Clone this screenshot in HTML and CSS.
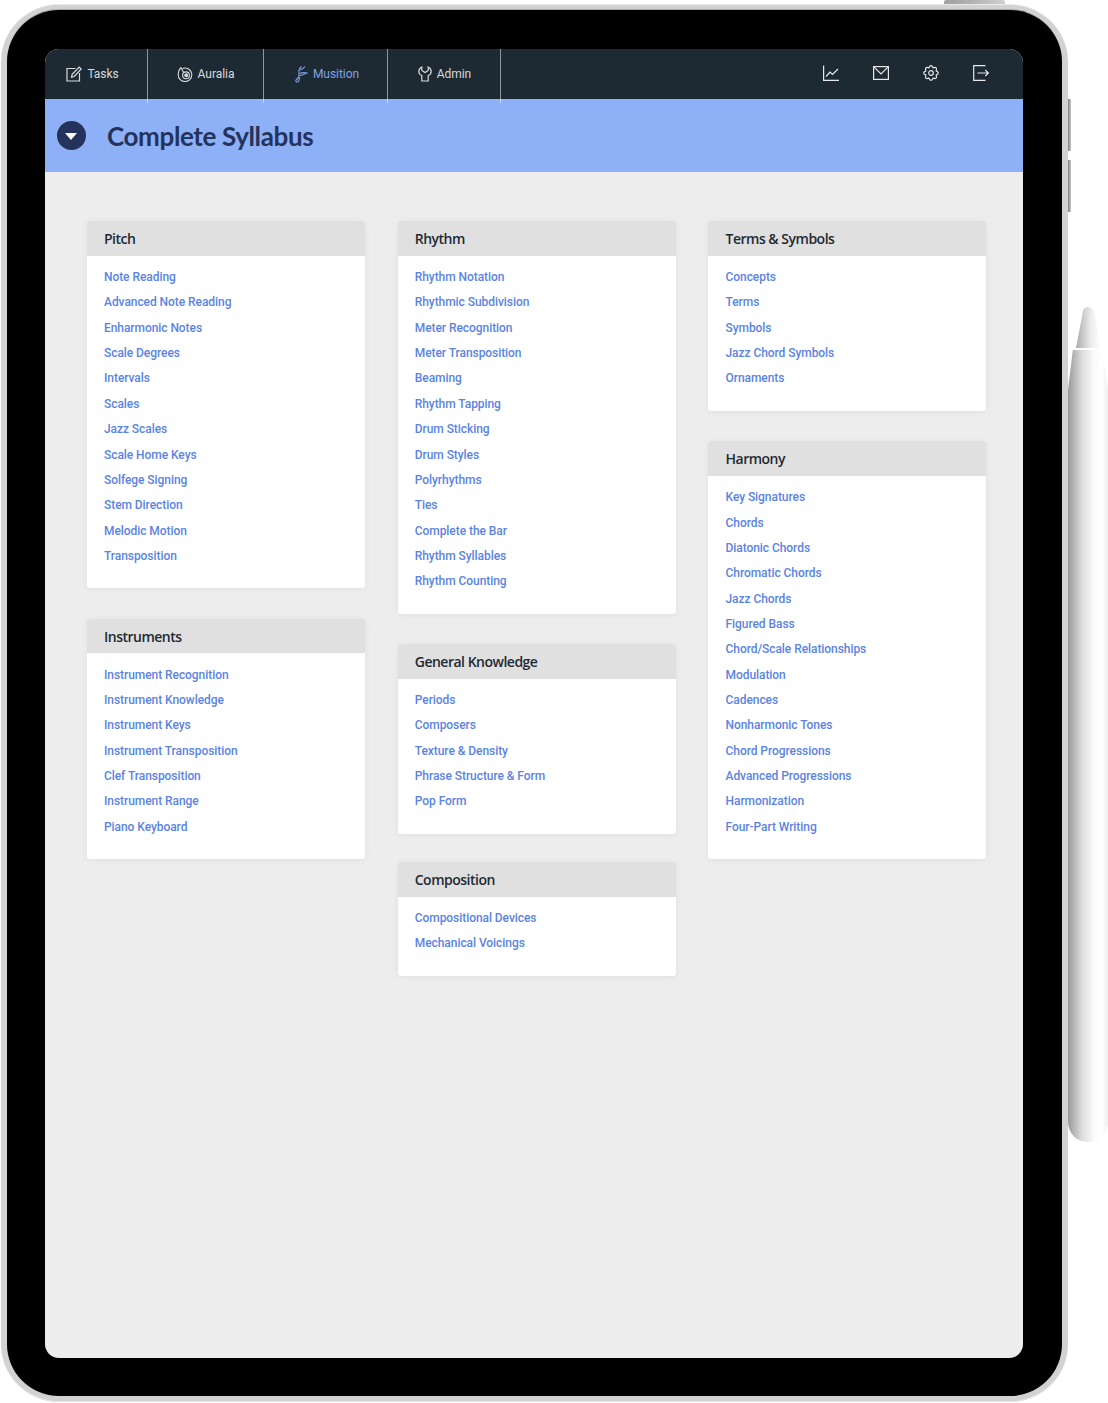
FILE: index.html
```html
<!DOCTYPE html>
<html lang="en">
<head>
    <meta charset="UTF-8">
    <title>Complete Syllabus</title>
    <link rel="stylesheet" href="styles.css">
</head>
<body>
    <div class="btn-top"></div>
    <div class="btn-side btn-side1"></div>
    <div class="btn-side btn-side2"></div>
    <div class="pencil">
        <div class="pencil-tip"></div>
        <div class="pencil-body"></div>
    </div>
    <div class="tablet">
        <div class="bezel">
            <div class="screen">
                <div class="nav">
                    <a class="nav-item item-tasks">
                        <svg width="16" height="16" viewBox="0 0 16 16" fill="none" stroke="currentColor" stroke-width="1.2"><path d="M9.500 2.500H1V15H13.500V7"/><path d="M5.500 11.200l.7-2.800L13.200 1l2 2-7 7.500z"/></svg>
                        Tasks
                    </a>
                    <a class="nav-item item-auralia">
                        <svg width="16" height="16" viewBox="0 0 16 16" fill="none" stroke="currentColor" stroke-width="1.1"><path d="M4 1.500C2 3.500 1 6 1.200 8.800a6.800 6.800 0 1 0 6.800-6.800C7 2 6 2.300 5.500 2.800"/><path d="M4 1.500L6.500 6.300"/><circle cx="9" cy="9.300" r="3.400"/><circle cx="9.200" cy="9.300" r="1.400" fill="currentColor"/></svg>
                        Auralia
                    </a>
                    <a class="nav-item item-musition">
                        <svg width="14" height="18" viewBox="0 0 14 18" fill="none" stroke="currentColor" stroke-width="1.1"><path d="M7.500 1.500C5.500 3 4.500 6 5 8.500S4.500 13 2.500 14.500c-1 1-1 2.500.5 2.500 2 0 2.500-3 2.500-5"/><path d="M6 5c2-.5 4-2 5-3.500"/><path d="M5.500 8.500C8 7.500 11 7.500 13 8c-2 1-4.500 2.500-7.500 2.500"/></svg>
                        Musition
                    </a>
                    <a class="nav-item item-admin">
                        <svg width="14" height="16" viewBox="0 0 14 16" fill="none" stroke="currentColor" stroke-width="1.2"><path d="M3.800 1C1.800 2 .8 3.500 .8 5.500c0 2 1.500 3.500 3 4V15h6.400V9.500c1.500-.5 3-2 3-4 0-2-1-3.500-3-4.500v3.500L7 6.500 3.800 4.500z"/></svg>
                        Admin
                    </a>
                    <div class="nav-right">
                        <svg width="16" height="16" viewBox="0 0 16 16" fill="none" stroke="currentColor" stroke-width="1.2"><path d="M.6 .5V15.400H16"/><path d="M3 11.500L7 7l2.500 2.500L15 4"/></svg>
                        <svg width="16" height="14" viewBox="0 0 16 14" fill="none" stroke="currentColor" stroke-width="1.2"><rect x=".6" y=".6" width="14.800" height="12.800"/><path d="M.6 .6L8 8l7.400-7.400"/></svg>
                        <svg width="16" height="16" viewBox="0 0 16 16" fill="none" stroke="currentColor" stroke-width="1.2"><circle cx="8" cy="8" r="2.300"/><path d="M13.170 10.140Q14.650 14.650 10.140 13.170Q8 17.400 5.860 13.170Q1.350 14.650 2.830 10.140Q-1.400 8 2.830 5.860Q1.350 1.350 5.860 2.830Q8 -1.400 10.140 2.830Q14.650 1.350 13.170 5.860Q17.400 8 13.170 10.140z"/></svg>
                        <svg width="16" height="16" viewBox="0 0 16 16" fill="none" stroke="currentColor" stroke-width="1.2"><path d="M12.500 .7H.7V15.300H12.500"/><path d="M4.500 8H15M12.300 5l3 3-3 3"/></svg>
                    </div>
                </div>
                <div class="title-bar">
                    <span class="toggle"><span class="caret"></span></span>
                    <h1>Complete Syllabus</h1>
                </div>
                <div class="content">
                    <div class="col">
                        <div class="card">
                            <h2>Pitch</h2>
                            <ul>
                                <li>Note Reading</li>
                                <li>Advanced Note Reading</li>
                                <li>Enharmonic Notes</li>
                                <li>Scale Degrees</li>
                                <li>Intervals</li>
                                <li>Scales</li>
                                <li>Jazz Scales</li>
                                <li>Scale Home Keys</li>
                                <li>Solfege Signing</li>
                                <li>Stem Direction</li>
                                <li>Melodic Motion</li>
                                <li>Transposition</li>
                            </ul>
                        </div>
                        <div class="card">
                            <h2>Instruments</h2>
                            <ul>
                                <li>Instrument Recognition</li>
                                <li>Instrument Knowledge</li>
                                <li>Instrument Keys</li>
                                <li>Instrument Transposition</li>
                                <li>Clef Transposition</li>
                                <li>Instrument Range</li>
                                <li>Piano Keyboard</li>
                            </ul>
                        </div>
                    </div>
                    <div class="col">
                        <div class="card">
                            <h2>Rhythm</h2>
                            <ul>
                                <li>Rhythm Notation</li>
                                <li>Rhythmic Subdivision</li>
                                <li>Meter Recognition</li>
                                <li>Meter Transposition</li>
                                <li>Beaming</li>
                                <li>Rhythm Tapping</li>
                                <li>Drum Sticking</li>
                                <li>Drum Styles</li>
                                <li>Polyrhythms</li>
                                <li>Ties</li>
                                <li>Complete the Bar</li>
                                <li>Rhythm Syllables</li>
                                <li>Rhythm Counting</li>
                            </ul>
                        </div>
                        <div class="card">
                            <h2>General Knowledge</h2>
                            <ul>
                                <li>Periods</li>
                                <li>Composers</li>
                                <li>Texture &amp; Density</li>
                                <li>Phrase Structure &amp; Form</li>
                                <li>Pop Form</li>
                            </ul>
                        </div>
                        <div class="card card-composition">
                            <h2>Composition</h2>
                            <ul>
                                <li>Compositional Devices</li>
                                <li>Mechanical Voicings</li>
                            </ul>
                        </div>
                    </div>
                    <div class="col">
                        <div class="card">
                            <h2>Terms &amp; Symbols</h2>
                            <ul>
                                <li>Concepts</li>
                                <li>Terms</li>
                                <li>Symbols</li>
                                <li>Jazz Chord Symbols</li>
                                <li>Ornaments</li>
                            </ul>
                        </div>
                        <div class="card">
                            <h2>Harmony</h2>
                            <ul>
                                <li>Key Signatures</li>
                                <li>Chords</li>
                                <li>Diatonic Chords</li>
                                <li>Chromatic Chords</li>
                                <li>Jazz Chords</li>
                                <li>Figured Bass</li>
                                <li>Chord/Scale Relationships</li>
                                <li>Modulation</li>
                                <li>Cadences</li>
                                <li>Nonharmonic Tones</li>
                                <li>Chord Progressions</li>
                                <li>Advanced Progressions</li>
                                <li>Harmonization</li>
                                <li>Four-Part Writing</li>
                            </ul>
                        </div>
                    </div>
                </div>
            </div>
        </div>
    </div>
</body>
</html>
```

FILE: styles.css
```css
html, body {
    margin: 0;
    padding: 0;
}
body {
    width: 1108px;
    height: 1403px;
    background-color: white;
    font-family: Roboto, sans-serif;
    position: relative;
    overflow: hidden;
}

/* device frame */
.tablet {
    width: 1067px;
    height: 1398px;
    margin: 4px 0 0 1px;
    box-sizing: border-box;
    padding: 5px 5.7px 6px 5.5px;
    border-radius: 58px;
    background-color: #d2d2d2;
    border-top: 1px solid #e8e8e8;
    box-shadow: inset 0 -1px 0 #e4e4e4;
}
.bezel {
    height: 100%;
    box-sizing: border-box;
    padding: 39px 39px 38px 38.5px;
    background-color: black;
    border-radius: 52px;
    box-shadow: 0 -1px 0 #a8a8a8;
}
.screen {
    height: 100%;
    background-color: #ededed;
    border-radius: 14px;
    overflow: hidden;
}
.btn-top {
    position: absolute;
    left: 944px;
    top: 0;
    width: 61px;
    height: 4px;
    border-radius: 2px 2px 0 0;
    background: linear-gradient(to right, #a0a0a0, #b4b4b4 50%, #d0d0d0);
}
.btn-side {
    position: absolute;
    left: 1068px;
    width: 3px;
    height: 52px;
    background: linear-gradient(to right, #808080, #c8c8c8);
}
.btn-side1 { top: 99px; }
.btn-side2 { top: 160px; }
.pencil {
    position: absolute;
    left: 1068px;
    top: 307px;
    width: 40px;
}
.pencil-tip {
    width: 25px;
    height: 41px;
    margin-left: 8px;
    clip-path: path('M0 41 L7 4 Q8 0 12 0 Q16 0 18 4 L25 41 Z');
    background: linear-gradient(to right, #aaa, #ededed 60%, #fff);
}
.pencil-body {
    height: 792px;
    margin-top: 2px;
    clip-path: polygon(12% 0, 85% 0, 100% 40px, 100% 100%, 0 100%, 0 40px);
    background: linear-gradient(to right, #999, #ddd 35%, #fafafa 65%, #fff 85%, #eee);
    border-radius: 0 0 20px 20px;
}

/* nav */
.nav {
    height: 50px;
    display: flex;
    align-items: flex-start;
    background-color: #1e2a33;
    color: #d8dbdd;
    font-size: 12px;
    position: relative;
    z-index: 1;
}
.nav-item {
    height: 54px;
    padding-bottom: 4px;
    display: flex;
    align-items: center;
    justify-content: center;
    gap: 5px;
    box-sizing: border-box;
    border-right: 1px solid rgba(255,255,255,0.5);
    letter-spacing: -.05px;
}
.item-tasks { width: 103px; padding-right: 7px; }
.item-auralia { width: 116px; }
.item-musition { width: 124px; padding-left: 2px; color: #7ea3e6; }
.item-admin { width: 113px; padding-left: 1px; }
.nav-right {
    margin-left: auto;
    height: 50px;
    width: 200px;
    padding-right: 34px;
    box-sizing: border-box;
    display: flex;
    align-items: center;
    justify-content: flex-end;
    gap: 34px;
    padding-bottom: 2px;
    color: #e6e8ea;
}

/* blue title */
.title-bar {
    height: 73px;
    background-color: #8db0f6;
    display: flex;
    align-items: center;
    padding-left: 11.5px;
}
.toggle {
    width: 29px;
    height: 29px;
    border-radius: 50%;
    background-color: #24335c;
    display: flex;
    align-items: center;
    justify-content: center;
    margin-right: 21.5px;
}
.caret {
    width: 0;
    height: 0;
    margin-top: 1px;
    border-left: 6.5px solid transparent;
    border-right: 6.5px solid transparent;
    border-top: 7px solid white;
}
h1 {
    margin: 0;
    font-family: Lato, sans-serif;
    font-size: 26px;
    font-weight: 700;
    letter-spacing: -.38px;
    color: #24335c;
}

/* columns */
.content {
    display: flex;
    gap: 32.8px;
    padding: 49px 37px 0 41.8px;
    align-items: flex-start;
}
.col {
    width: 278px;
    display: flex;
    flex-direction: column;
    gap: 30.1px;
}
.card {
    background-color: white;
    border-radius: 3px;
    overflow: hidden;
    box-shadow: 0 1px 6px rgba(0,0,0,0.06);
}
.card-composition {
    margin-top: -2px;
}
.card h2 {
    margin: 0;
    height: 34.8px;
    line-height: 36.5px;
    padding-left: 17.2px;
    background-color: #e0e0e0;
    font-family: "Open Sans", sans-serif;
    font-size: 14px;
    font-weight: 600;
    letter-spacing: -.5px;
    color: #1e2a33;
}
.card ul {
    margin: 0;
    padding: 9.3px 17.2px 19.2px;
    list-style: none;
}
.card li {
    height: 25.35px;
    line-height: 25.35px;
    font-size: 12px;
    font-weight: 500;
    letter-spacing: -.06px;
    color: #5b84e0;
}
```
